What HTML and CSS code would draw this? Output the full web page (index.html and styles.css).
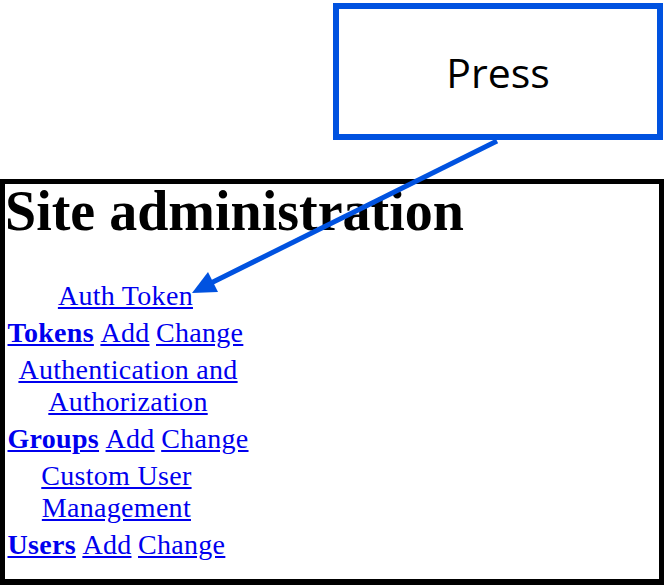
FILE: index.html
```html
<!DOCTYPE html>
<html>
<head>
<meta charset="utf-8">
<title>Site administration</title>
<link rel="stylesheet" href="styles.css">
</head>
<body>
<div class="canvas">
  <div class="callout"><span class="callout-text">Press</span></div>
  <div class="shot">
    <h1 class="title">Site administration</h1>
    <table class="module">
      <caption><a href="#" class="section">Auth Token</a></caption>
      <tr><th scope="row"><a href="#">Tokens</a></th><td><a href="#">Add</a></td><td><a href="#">Change</a></td></tr>
    </table>
    <table class="module">
      <caption><a href="#" class="section">Authentication and Authorization</a></caption>
      <tr><th scope="row"><a href="#">Groups</a></th><td><a href="#">Add</a></td><td><a href="#">Change</a></td></tr>
    </table>
    <table class="module">
      <caption><a href="#" class="section">Custom User Management</a></caption>
      <tr><th scope="row"><a href="#">Users</a></th><td><a href="#">Add</a></td><td><a href="#">Change</a></td></tr>
    </table>
  </div>
  <svg class="arrow" width="666" height="585" viewBox="0 0 666 585" xmlns="http://www.w3.org/2000/svg">
    <line x1="497" y1="141" x2="211" y2="283" stroke="#0052e0" stroke-width="5"/>
    <polygon points="192,293 218,292 208,272" fill="#0052e0"/>
  </svg>
</div>
</body>
</html>
```

FILE: styles.css
```css
html, body {
  margin: 0;
  padding: 0;
  background: #fff;
  overflow: hidden;
}

.canvas {
  position: relative;
  width: 666px;
  height: 585px;
  overflow: hidden;
}

.callout {
  position: absolute;
  left: 333px;
  top: 3px;
  width: 330px;
  height: 137px;
  box-sizing: border-box;
  border: 6px solid #0052e0;
  background: #fff;
  display: flex;
  align-items: center;
  justify-content: center;
  font-family: "Open Sans", "Noto Sans", sans-serif;
  font-size: 41px;
  color: #000;
}

.shot {
  margin-top: 179px;
  width: 664px;
  height: 406px;
  box-sizing: border-box;
  border: 5px solid #000;
  border-bottom-width: 6px;
  font-family: "Liberation Serif", "Times New Roman", serif;
  font-size: 28px;
  line-height: 32.2px;
  color: #000;
}

.title {
  margin: -1px 0 41px 0;
  font-size: 56px;
  line-height: 56px;
  font-weight: bold;
}

.module {
  border-collapse: separate;
  border-spacing: 3.5px;
  margin-left: -2.25px;
}

.module caption {
  line-height: 32.2px;
}

.module th,
.module td {
  padding: 1.75px;
}

.shot a {
  color: #0000ee;
  text-decoration: underline;
  letter-spacing: 0.3px;
}

.arrow {
  position: absolute;
  left: 0;
  top: 0;
}
```
